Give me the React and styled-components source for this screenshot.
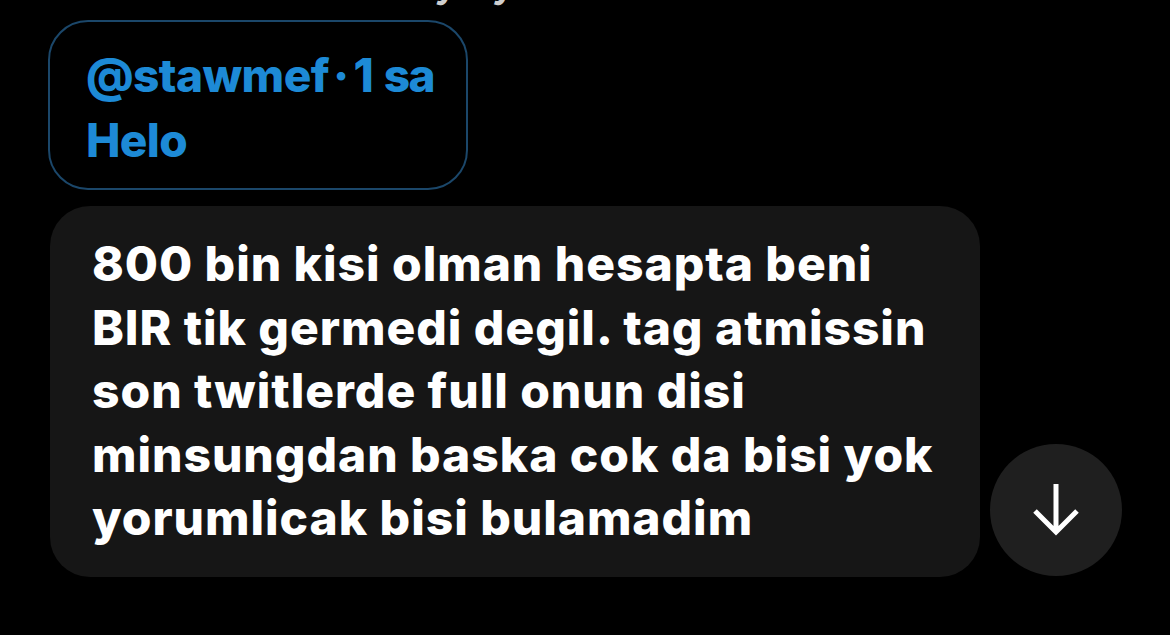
import React from "react";
import styled, { createGlobalStyle } from "styled-components";

const Global = createGlobalStyle`
  html, body { margin: 0; padding: 0; background: #000; }
  body { font-family: Inter, "Liberation Sans", sans-serif; overflow: hidden; }
`;

const Page = styled.div`
  width: 1170px;
  height: 635px;
  background: #000;
  display: flex;
  flex-direction: column;
  align-items: flex-start;
  padding-left: 48px;
  box-sizing: border-box;
`;

const TopLine = styled.div`
  height: 40px;
  margin-top: -37px;
  display: flex;
  gap: 34px;
  padding-left: 386px;
  font-size: 40px;
  line-height: 40px;
  font-weight: 600;
  color: #cfcfcf;
`;

const ReplyBox = styled.div`
  margin-top: 17px;
  width: 420px;
  height: 170px;
  box-sizing: border-box;
  border: 2.5px solid #1b476a;
  border-radius: 40px;
  padding: 21px 0 0 36px;
  color: #1d8ad6;
  font-weight: 800;
  font-size: 46px;
  line-height: 65px;
  letter-spacing: -0.6px;
`;

const ReplyLine = styled.div`
  white-space: nowrap;
`;

const Dot = styled.span`
  margin: 0 5px 0 4px;
`;

const Time = styled.span`
  letter-spacing: -1.6px;
  word-spacing: 3px;
`;

const Row = styled.div`
  margin-top: 16px;
  display: flex;
  align-items: flex-end;
  gap: 10px;
`;

const Bubble = styled.div`
  width: 930px;
  height: 371px;
  box-sizing: border-box;
  margin-left: 2px;
  background: #161616;
  border-radius: 40px;
  padding: 26px 0 0 42px;
  color: #fff;
  font-weight: 800;
  font-size: 48px;
  line-height: 63.5px;
  letter-spacing: 0.95px;
`;

const Line = styled.div`
  white-space: nowrap;
`;

const ScrollButton = styled.button`
  width: 132px;
  height: 132px;
  border-radius: 50%;
  border: none;
  padding: 0;
  background: #1f1f1f;
  display: flex;
  align-items: center;
  justify-content: center;
  margin-bottom: 1px;
`;

const lines = [
  "800 bin kisi olman hesapta beni",
  "BIR tik germedi degil. tag atmissin",
  "son twitlerde full onun disi",
  "minsungdan baska cok da bisi yok",
  "yorumlicak bisi bulamadim",
];

export default function App() {
  return (
    <>
      <Global />
      <Page>
        <TopLine>
          <span>y</span>
          <span>y</span>
        </TopLine>
        <ReplyBox>
          <ReplyLine>
            @stawmef<Dot>·</Dot>
            <Time>1 sa</Time>
          </ReplyLine>
          <ReplyLine>Helo</ReplyLine>
        </ReplyBox>
        <Row>
          <Bubble>
            {lines.map((l) => (
              <Line key={l}>{l}</Line>
            ))}
          </Bubble>
          <ScrollButton aria-label="Aşağı kaydır">
            <svg width="132" height="132" viewBox="0 0 132 132">
              <path
                d="M66 40 V87 M45 67 L66 88 L87 67"
                fill="none"
                stroke="#fff"
                strokeWidth="5"
                strokeLinecap="butt"
                strokeLinejoin="miter"
              />
            </svg>
          </ScrollButton>
        </Row>
      </Page>
    </>
  );
}
